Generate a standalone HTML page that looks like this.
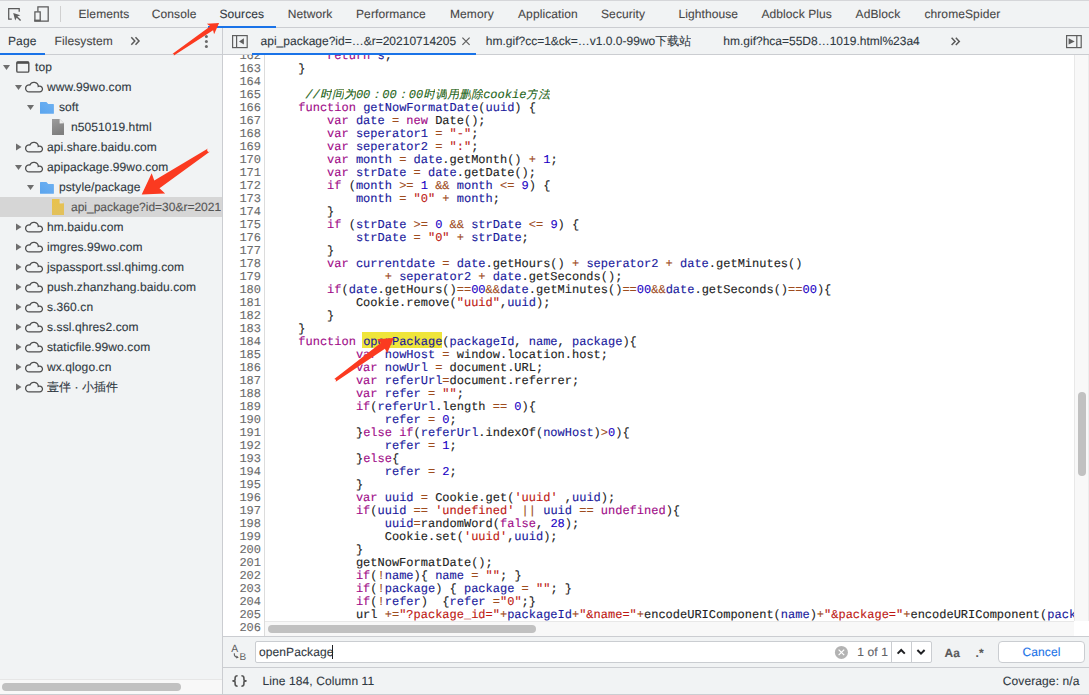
<!DOCTYPE html>
<html><head><meta charset="utf-8">
<style>
*{box-sizing:border-box}
html,body{margin:0;padding:0}
body{text-rendering:geometricPrecision;width:1089px;height:695px;overflow:hidden;position:relative;background:#f1f3f4;font-family:"Liberation Sans",sans-serif;font-size:12px;color:#303942;letter-spacing:0.1px}
.a{position:absolute}
svg{position:absolute;overflow:visible}
.t{position:absolute;white-space:pre;line-height:14px;-webkit-text-stroke:0.1px currentColor}
.hl{position:absolute;background:#cbcdd1}
.vl{position:absolute;background:#cbcdd1}
#code{position:absolute;left:223px;top:55px;width:851px;height:581px;background:#fff;overflow:hidden}
.ln{position:absolute;left:0;width:38px;letter-spacing:0;-webkit-text-stroke:0.1px currentColor;text-align:right;font-family:"Liberation Mono",monospace;font-size:12px;line-height:13px;color:#6b6b6b;white-space:pre}
.cl{position:absolute;left:46.5px;letter-spacing:0;-webkit-text-stroke:0.12px currentColor;font-family:"Liberation Mono",monospace;font-size:12px;line-height:13px;color:#222;white-space:pre}
.k{color:#a00a88}.v{color:#18189c}.o{color:#9e4c1e}.s{color:#bd1712}.n{color:#1a00c4}.c{color:#1f6621;font-style:italic}
.cj{display:inline-block;width:12px;overflow:hidden;vertical-align:top}
.row{position:absolute;left:0;width:222px;height:20px}
.rt{position:absolute;white-space:pre;line-height:20px;top:0;-webkit-text-stroke:0.12px currentColor}
</style></head><body>
<!-- ===== top toolbar ===== -->
<div class="hl" style="left:0;top:0;width:1089px;height:1px;background:#d5d6d9"></div>
<div class="hl" style="left:0;top:27px;width:1089px;height:1px"></div>
<svg style="left:0;top:0" width="70" height="27" viewBox="0 0 70 27">
  <path d="M11.8,19 H8.7 V8.6 H19.2 V11.7" fill="none" stroke="#5a5a5a" stroke-width="1.25" stroke-linejoin="miter"/>
  <path d="M13.2,13.1 L20.3,15.3 L17.3,16.6 L15.2,20.4 Z" fill="#5f5f5f"/>
  <path d="M16.5,16.5 L20.6,20.6" stroke="#5f5f5f" stroke-width="1.4"/>
  <path d="M37.9,11.5 V6.8 H48.2 V21 H40.5" fill="none" stroke="#5a5a5a" stroke-width="1.25"/>
  <rect x="34.9" y="11.9" width="5.3" height="9.1" fill="none" stroke="#5a5a5a" stroke-width="1.25"/>
  <rect x="34.3" y="19.6" width="6.4" height="2" fill="#5f5f5f"/>
  <rect x="60" y="6" width="1" height="16" fill="#d0d0d0"/>
</svg>
<div class="a" style="left:208px;top:26px;width:68px;height:2px;background:#1a73e8"></div>
<div class="t" style="left:78.5px;top:7px;color:#474747">Elements</div>
<div class="t" style="left:151.8px;top:7px;color:#474747">Console</div>
<div class="t" style="left:219.4px;top:7px">Sources</div>
<div class="t" style="left:287.7px;top:7px;color:#474747">Network</div>
<div class="t" style="left:356px;top:7px;color:#474747">Performance</div>
<div class="t" style="left:450px;top:7px;color:#474747">Memory</div>
<div class="t" style="left:518px;top:7px;color:#474747">Application</div>
<div class="t" style="left:601px;top:7px;color:#474747">Security</div>
<div class="t" style="left:678.4px;top:7px;color:#474747">Lighthouse</div>
<div class="t" style="left:761.4px;top:7px;color:#474747">Adblock Plus</div>
<div class="t" style="left:855.6px;top:7px;color:#474747">AdBlock</div>
<div class="t" style="left:924.4px;top:7px;color:#474747">chromeSpider</div>

<!-- ===== sidebar ===== -->
<div class="vl" style="left:222px;top:28px;width:1px;height:667px"></div>
<div class="hl" style="left:0;top:54px;width:1089px;height:1px"></div>
<div class="a" style="left:0;top:53px;width:45px;height:2px;background:#1a73e8"></div>
<div class="t" style="left:8px;top:34px">Page</div>
<div class="t" style="left:54.5px;top:34px;color:#474747">Filesystem</div>
<svg style="left:0;top:28px" width="222" height="26" viewBox="0 0 222 26">
  <path d="M131.3,9.3 L134.8,13 L131.3,16.7 M135.5,9.3 L139,13 L135.5,16.7" fill="none" stroke="#5a5a5a" stroke-width="1.5"/>
  <circle cx="206.4" cy="8.5" r="1.5" fill="#6a6a6a"/>
  <circle cx="206.4" cy="13.5" r="1.5" fill="#6a6a6a"/>
  <circle cx="206.4" cy="18.5" r="1.5" fill="#6a6a6a"/>
</svg>
<div class="a" style="left:0;top:55px;width:222px;height:624px;overflow:hidden">
<div class="rt" style="left:35.0px;top:2px;color:#303942">top</div>
<div class="rt" style="left:47.0px;top:22px;color:#303942">www.99wo.com</div>
<div class="rt" style="left:59.0px;top:42px;color:#303942">soft</div>
<div class="rt" style="left:71.0px;top:62px;color:#303942">n5051019.html</div>
<div class="rt" style="left:47.0px;top:82px;color:#303942">api.share.baidu.com</div>
<div class="rt" style="left:47.0px;top:102px;color:#303942">apipackage.99wo.com</div>
<div class="rt" style="left:59.0px;top:122px;color:#303942">pstyle/package</div>
<div class="a" style="left:0;top:142px;width:222px;height:20px;background:#d6d6d6"></div>
<div class="rt" style="left:71.0px;top:142px;color:#555;letter-spacing:0;width:150px;overflow:hidden">api_package?id=30&amp;r=20210714205</div>
<div class="rt" style="left:47.0px;top:162px;color:#303942">hm.baidu.com</div>
<div class="rt" style="left:47.0px;top:182px;color:#303942">imgres.99wo.com</div>
<div class="rt" style="left:47.0px;top:202px;color:#303942">jspassport.ssl.qhimg.com</div>
<div class="rt" style="left:47.0px;top:222px;color:#303942">push.zhanzhang.baidu.com</div>
<div class="rt" style="left:47.0px;top:242px;color:#303942">s.360.cn</div>
<div class="rt" style="left:47.0px;top:262px;color:#303942">s.ssl.qhres2.com</div>
<div class="rt" style="left:47.0px;top:282px;color:#303942">staticfile.99wo.com</div>
<div class="rt" style="left:47.0px;top:302px;color:#303942">wx.qlogo.cn</div>
<div class="rt" style="left:47.0px;top:322px;color:#303942"><span class="cj">壹</span><span class="cj">伴</span> · <span class="cj">小</span><span class="cj">插</span><span class="cj">件</span></div>
<svg style="left:0;top:0" width="222" height="624" viewBox="0 0 222 624"><defs><linearGradient id="gf" x1="0" y1="0" x2="0.3" y2="1"><stop offset="0" stop-color="#9c9c9c"/><stop offset="1" stop-color="#7f7f7f"/></linearGradient><linearGradient id="gy" x1="0" y1="0" x2="0.3" y2="1"><stop offset="0" stop-color="#e9c24a"/><stop offset="1" stop-color="#e2c15c"/></linearGradient><linearGradient id="gb" x1="0" y1="1" x2="1" y2="0"><stop offset="0" stop-color="#5aa4ee"/><stop offset="1" stop-color="#6eb1f2"/></linearGradient></defs><path d="M3.0,9.9 H10.0 L6.5,15.1 Z" fill="#6e6e6e"/><rect x="16.8" y="6.9" width="12" height="10.2" rx="1.2" fill="none" stroke="#4f4f4f" stroke-width="1.4"/><rect x="16.8" y="6.6" width="12" height="2.2" fill="#4f4f4f"/><path d="M15.0,29.9 H22.0 L18.5,35.1 Z" fill="#6e6e6e"/><path transform="translate(25.0,26.0)" d="M4.35,10.9 H14.5 A2.9,2.9 0 1 0 13.3,5.4 A4.375,4.375 0 0 0 4.9,4.0 A3.5,3.5 0 1 0 4.35,10.9 Z" fill="none" stroke="#4f4f4f" stroke-width="1.3"/><path d="M27.0,49.9 H34.0 L30.5,55.1 Z" fill="#6e6e6e"/><path transform="translate(40.0,47.0)" d="M0.6,0 H6.4 L8.2,1.9 H13.3 Q13.9,1.9 13.9,2.5 V11.2 Q13.9,11.8 13.3,11.8 H0.6 Q0,11.8 0,11.2 V0.6 Q0,0 0.6,0 Z" fill="url(#gb)"/><path transform="translate(52.0,64.0)" d="M0,0 H7.6 L12,4.3 V16 H0 Z" fill="url(#gf)"/><path transform="translate(52.0,64.0)" d="M7.6,0 V4.6 L12,4.3 Z" fill="#eeeeee"/><path d="M16.0,88.5 V95.6 L21.5,92.0 Z" fill="#6e6e6e"/><path transform="translate(25.0,86.0)" d="M4.35,10.9 H14.5 A2.9,2.9 0 1 0 13.3,5.4 A4.375,4.375 0 0 0 4.9,4.0 A3.5,3.5 0 1 0 4.35,10.9 Z" fill="none" stroke="#4f4f4f" stroke-width="1.3"/><path d="M15.0,109.9 H22.0 L18.5,115.1 Z" fill="#6e6e6e"/><path transform="translate(25.0,106.0)" d="M4.35,10.9 H14.5 A2.9,2.9 0 1 0 13.3,5.4 A4.375,4.375 0 0 0 4.9,4.0 A3.5,3.5 0 1 0 4.35,10.9 Z" fill="none" stroke="#4f4f4f" stroke-width="1.3"/><path d="M27.0,129.9 H34.0 L30.5,135.1 Z" fill="#6e6e6e"/><path transform="translate(40.0,127.0)" d="M0.6,0 H6.4 L8.2,1.9 H13.3 Q13.9,1.9 13.9,2.5 V11.2 Q13.9,11.8 13.3,11.8 H0.6 Q0,11.8 0,11.2 V0.6 Q0,0 0.6,0 Z" fill="url(#gb)"/><path transform="translate(52.0,144.0)" d="M0,0 H7.6 L12,4.3 V16 H0 Z" fill="url(#gy)"/><path transform="translate(52.0,144.0)" d="M7.6,0 V4.6 L12,4.3 Z" fill="#dcdde0"/><path d="M16.0,168.5 V175.6 L21.5,172.1 Z" fill="#6e6e6e"/><path transform="translate(25.0,166.0)" d="M4.35,10.9 H14.5 A2.9,2.9 0 1 0 13.3,5.4 A4.375,4.375 0 0 0 4.9,4.0 A3.5,3.5 0 1 0 4.35,10.9 Z" fill="none" stroke="#4f4f4f" stroke-width="1.3"/><path d="M16.0,188.5 V195.6 L21.5,192.1 Z" fill="#6e6e6e"/><path transform="translate(25.0,186.0)" d="M4.35,10.9 H14.5 A2.9,2.9 0 1 0 13.3,5.4 A4.375,4.375 0 0 0 4.9,4.0 A3.5,3.5 0 1 0 4.35,10.9 Z" fill="none" stroke="#4f4f4f" stroke-width="1.3"/><path d="M16.0,208.5 V215.6 L21.5,212.1 Z" fill="#6e6e6e"/><path transform="translate(25.0,206.0)" d="M4.35,10.9 H14.5 A2.9,2.9 0 1 0 13.3,5.4 A4.375,4.375 0 0 0 4.9,4.0 A3.5,3.5 0 1 0 4.35,10.9 Z" fill="none" stroke="#4f4f4f" stroke-width="1.3"/><path d="M16.0,228.5 V235.6 L21.5,232.1 Z" fill="#6e6e6e"/><path transform="translate(25.0,226.0)" d="M4.35,10.9 H14.5 A2.9,2.9 0 1 0 13.3,5.4 A4.375,4.375 0 0 0 4.9,4.0 A3.5,3.5 0 1 0 4.35,10.9 Z" fill="none" stroke="#4f4f4f" stroke-width="1.3"/><path d="M16.0,248.5 V255.6 L21.5,252.1 Z" fill="#6e6e6e"/><path transform="translate(25.0,246.0)" d="M4.35,10.9 H14.5 A2.9,2.9 0 1 0 13.3,5.4 A4.375,4.375 0 0 0 4.9,4.0 A3.5,3.5 0 1 0 4.35,10.9 Z" fill="none" stroke="#4f4f4f" stroke-width="1.3"/><path d="M16.0,268.5 V275.6 L21.5,272.1 Z" fill="#6e6e6e"/><path transform="translate(25.0,266.0)" d="M4.35,10.9 H14.5 A2.9,2.9 0 1 0 13.3,5.4 A4.375,4.375 0 0 0 4.9,4.0 A3.5,3.5 0 1 0 4.35,10.9 Z" fill="none" stroke="#4f4f4f" stroke-width="1.3"/><path d="M16.0,288.5 V295.6 L21.5,292.1 Z" fill="#6e6e6e"/><path transform="translate(25.0,286.0)" d="M4.35,10.9 H14.5 A2.9,2.9 0 1 0 13.3,5.4 A4.375,4.375 0 0 0 4.9,4.0 A3.5,3.5 0 1 0 4.35,10.9 Z" fill="none" stroke="#4f4f4f" stroke-width="1.3"/><path d="M16.0,308.5 V315.6 L21.5,312.1 Z" fill="#6e6e6e"/><path transform="translate(25.0,306.0)" d="M4.35,10.9 H14.5 A2.9,2.9 0 1 0 13.3,5.4 A4.375,4.375 0 0 0 4.9,4.0 A3.5,3.5 0 1 0 4.35,10.9 Z" fill="none" stroke="#4f4f4f" stroke-width="1.3"/><path d="M16.0,328.5 V335.6 L21.5,332.1 Z" fill="#6e6e6e"/><path transform="translate(25.0,326.0)" d="M4.35,10.9 H14.5 A2.9,2.9 0 1 0 13.3,5.4 A4.375,4.375 0 0 0 4.9,4.0 A3.5,3.5 0 1 0 4.35,10.9 Z" fill="none" stroke="#4f4f4f" stroke-width="1.3"/></svg>
</div>

<!-- sidebar scrollbar -->
<div class="a" style="left:0;top:679px;width:222px;height:15px;background:#f8f8f8;border-top:1px solid #e6e6e6"></div>
<div class="a" style="left:2px;top:683px;width:179px;height:8px;border-radius:4px;background:#c1c1c1"></div>

<!-- ===== editor tabs ===== -->
<svg style="left:223px;top:28px" width="866" height="26" viewBox="0 0 866 26">
  <rect x="9.6" y="7.6" width="14.6" height="12" fill="none" stroke="#5f5f5f" stroke-width="1.2"/>
  <rect x="13" y="7.6" width="1.2" height="12" fill="#5f5f5f"/>
  <path d="M16,13.4 L20.9,10.2 V16.6 Z" fill="#5f5f5f"/>
  <path d="M239.4,9.6 L246.6,16.8 M246.6,9.6 L239.4,16.8" stroke="#5f5f5f" stroke-width="1.2"/>
  <path d="M728.6,9.8 L732.1,13.4 L728.6,17 M732.8,9.8 L736.3,13.4 L732.8,17" fill="none" stroke="#5a5a5a" stroke-width="1.5"/>
  <rect x="843.6" y="7.6" width="14.6" height="12" fill="none" stroke="#5f5f5f" stroke-width="1.2"/>
  <rect x="853.2" y="7.6" width="1.2" height="12" fill="#5f5f5f"/>
  <path d="M851.7,13.4 L845.6,10.2 V16.6 Z" fill="#5f5f5f"/>
</svg>
<div class="a" style="left:251.6px;top:53px;width:224.4px;height:2px;background:#1a73e8"></div>
<div class="t" style="left:260.6px;top:34px;letter-spacing:0">api_package?id=…&amp;r=20210714205</div>
<div class="t" style="left:485.8px;top:34px;letter-spacing:0">hm.gif?cc=1&amp;ck=…v1.0.0-99wo<span class="cj">下</span><span class="cj">载</span><span class="cj">站</span></div>
<div class="t" style="left:723.3px;top:34px;letter-spacing:0">hm.gif?hca=55D8…1019.html%23a4</div>

<!-- ===== code ===== -->
<div id="code">
<div class="a" style="left:41px;top:0;width:1px;height:581px;background:#dcdcdc"></div>
<div class="a" style="left:139px;top:277px;width:80px;height:16px;background:#efe53b"></div>
<div class="ln" style="top:-5px">162</div>
<div class="cl" style="top:-5px">        <span class="k">return</span> <span class="v">s</span>;</div>
<div class="ln" style="top:8px">163</div>
<div class="cl" style="top:8px">    }</div>
<div class="ln" style="top:21px">164</div>
<div class="ln" style="top:34px">165</div>
<div class="cl" style="top:34px">     <span class="c">//<span class="cj">时</span><span class="cj">间</span><span class="cj">为</span>00<span class="cj">：</span>00<span class="cj">：</span>00<span class="cj">时</span><span class="cj">调</span><span class="cj">用</span><span class="cj">删</span><span class="cj">除</span>cookie<span class="cj">方</span><span class="cj">法</span></span></div>
<div class="ln" style="top:47px">166</div>
<div class="cl" style="top:47px">    <span class="k">function</span> <span class="v">getNowFormatDate</span>(<span class="v">uuid</span>) {</div>
<div class="ln" style="top:60px">167</div>
<div class="cl" style="top:60px">        <span class="k">var</span> <span class="v">date</span> <span class="o">=</span> <span class="k">new</span> Date();</div>
<div class="ln" style="top:73px">168</div>
<div class="cl" style="top:73px">        <span class="k">var</span> <span class="v">seperator1</span> <span class="o">=</span> <span class="s">&quot;-&quot;</span>;</div>
<div class="ln" style="top:86px">169</div>
<div class="cl" style="top:86px">        <span class="k">var</span> <span class="v">seperator2</span> <span class="o">=</span> <span class="s">&quot;:&quot;</span>;</div>
<div class="ln" style="top:99px">170</div>
<div class="cl" style="top:99px">        <span class="k">var</span> <span class="v">month</span> <span class="o">=</span> <span class="v">date</span>.getMonth() <span class="o">+</span> <span class="n">1</span>;</div>
<div class="ln" style="top:112px">171</div>
<div class="cl" style="top:112px">        <span class="k">var</span> <span class="v">strDate</span> <span class="o">=</span> <span class="v">date</span>.getDate();</div>
<div class="ln" style="top:125px">172</div>
<div class="cl" style="top:125px">        <span class="k">if</span> (<span class="v">month</span> <span class="o">&gt;=</span> <span class="n">1</span> <span class="o">&amp;&amp;</span> <span class="v">month</span> <span class="o">&lt;=</span> <span class="n">9</span>) {</div>
<div class="ln" style="top:138px">173</div>
<div class="cl" style="top:138px">            <span class="v">month</span> <span class="o">=</span> <span class="s">&quot;0&quot;</span> <span class="o">+</span> <span class="v">month</span>;</div>
<div class="ln" style="top:151px">174</div>
<div class="cl" style="top:151px">        }</div>
<div class="ln" style="top:164px">175</div>
<div class="cl" style="top:164px">        <span class="k">if</span> (<span class="v">strDate</span> <span class="o">&gt;=</span> <span class="n">0</span> <span class="o">&amp;&amp;</span> <span class="v">strDate</span> <span class="o">&lt;=</span> <span class="n">9</span>) {</div>
<div class="ln" style="top:177px">176</div>
<div class="cl" style="top:177px">            <span class="v">strDate</span> <span class="o">=</span> <span class="s">&quot;0&quot;</span> <span class="o">+</span> <span class="v">strDate</span>;</div>
<div class="ln" style="top:190px">177</div>
<div class="cl" style="top:190px">        }</div>
<div class="ln" style="top:203px">178</div>
<div class="cl" style="top:203px">        <span class="k">var</span> <span class="v">currentdate</span> <span class="o">=</span> <span class="v">date</span>.getHours() <span class="o">+</span> <span class="v">seperator2</span> <span class="o">+</span> <span class="v">date</span>.getMinutes()</div>
<div class="ln" style="top:216px">179</div>
<div class="cl" style="top:216px">                <span class="o">+</span> <span class="v">seperator2</span> <span class="o">+</span> <span class="v">date</span>.getSeconds();</div>
<div class="ln" style="top:229px">180</div>
<div class="cl" style="top:229px">        <span class="k">if</span>(<span class="v">date</span>.getHours()<span class="o">==</span><span class="n">00</span><span class="o">&amp;&amp;</span><span class="v">date</span>.getMinutes()<span class="o">==</span><span class="n">00</span><span class="o">&amp;&amp;</span><span class="v">date</span>.getSeconds()<span class="o">==</span><span class="n">00</span>){</div>
<div class="ln" style="top:242px">181</div>
<div class="cl" style="top:242px">            Cookie.remove(<span class="s">&quot;uuid&quot;</span>,<span class="v">uuid</span>);</div>
<div class="ln" style="top:255px">182</div>
<div class="cl" style="top:255px">        }</div>
<div class="ln" style="top:268px">183</div>
<div class="cl" style="top:268px">    }</div>
<div class="ln" style="top:281px">184</div>
<div class="cl" style="top:281px">    <span class="k">function</span> <span class="v">openPackage</span>(<span class="v">packageId</span>, <span class="v">name</span>, <span class="v">package</span>){</div>
<div class="ln" style="top:294px">185</div>
<div class="cl" style="top:294px">            <span class="k">var</span> <span class="v">nowHost</span> <span class="o">=</span> window.location.host;</div>
<div class="ln" style="top:307px">186</div>
<div class="cl" style="top:307px">            <span class="k">var</span> <span class="v">nowUrl</span> <span class="o">=</span> document.URL;</div>
<div class="ln" style="top:320px">187</div>
<div class="cl" style="top:320px">            <span class="k">var</span> <span class="v">referUrl</span><span class="o">=</span>document.referrer;</div>
<div class="ln" style="top:333px">188</div>
<div class="cl" style="top:333px">            <span class="k">var</span> <span class="v">refer</span> <span class="o">=</span> <span class="s">&quot;&quot;</span>;</div>
<div class="ln" style="top:346px">189</div>
<div class="cl" style="top:346px">            <span class="k">if</span>(<span class="v">referUrl</span>.length <span class="o">==</span> <span class="n">0</span>){</div>
<div class="ln" style="top:359px">190</div>
<div class="cl" style="top:359px">                <span class="v">refer</span> <span class="o">=</span> <span class="n">0</span>;</div>
<div class="ln" style="top:372px">191</div>
<div class="cl" style="top:372px">            }<span class="k">else</span> <span class="k">if</span>(<span class="v">referUrl</span>.indexOf(<span class="v">nowHost</span>)<span class="o">&gt;</span><span class="n">0</span>){</div>
<div class="ln" style="top:385px">192</div>
<div class="cl" style="top:385px">                <span class="v">refer</span> <span class="o">=</span> <span class="n">1</span>;</div>
<div class="ln" style="top:398px">193</div>
<div class="cl" style="top:398px">            }<span class="k">else</span>{</div>
<div class="ln" style="top:411px">194</div>
<div class="cl" style="top:411px">                <span class="v">refer</span> <span class="o">=</span> <span class="n">2</span>;</div>
<div class="ln" style="top:424px">195</div>
<div class="cl" style="top:424px">            }</div>
<div class="ln" style="top:437px">196</div>
<div class="cl" style="top:437px">            <span class="k">var</span> <span class="v">uuid</span> <span class="o">=</span> Cookie.get(<span class="s">&#x27;uuid&#x27;</span> ,<span class="v">uuid</span>);</div>
<div class="ln" style="top:450px">197</div>
<div class="cl" style="top:450px">            <span class="k">if</span>(<span class="v">uuid</span> <span class="o">==</span> <span class="s">&#x27;undefined&#x27;</span> <span class="o">||</span> <span class="v">uuid</span> <span class="o">==</span> <span class="k">undefined</span>){</div>
<div class="ln" style="top:463px">198</div>
<div class="cl" style="top:463px">                <span class="v">uuid</span><span class="o">=</span>randomWord(<span class="k">false</span>, <span class="n">28</span>);</div>
<div class="ln" style="top:476px">199</div>
<div class="cl" style="top:476px">                Cookie.set(<span class="s">&#x27;uuid&#x27;</span>,<span class="v">uuid</span>);</div>
<div class="ln" style="top:489px">200</div>
<div class="cl" style="top:489px">            }</div>
<div class="ln" style="top:502px">201</div>
<div class="cl" style="top:502px">            getNowFormatDate();</div>
<div class="ln" style="top:515px">202</div>
<div class="cl" style="top:515px">            <span class="k">if</span>(<span class="o">!</span><span class="v">name</span>){ <span class="v">name</span> <span class="o">=</span> <span class="s">&quot;&quot;</span>; }</div>
<div class="ln" style="top:528px">203</div>
<div class="cl" style="top:528px">            <span class="k">if</span>(<span class="o">!</span><span class="v">package</span>) { <span class="v">package</span> <span class="o">=</span> <span class="s">&quot;&quot;</span>; }</div>
<div class="ln" style="top:541px">204</div>
<div class="cl" style="top:541px">            <span class="k">if</span>(<span class="o">!</span><span class="v">refer</span>)  {<span class="v">refer</span> <span class="o">=</span><span class="s">&quot;0&quot;</span>;}</div>
<div class="ln" style="top:554px">205</div>
<div class="cl" style="top:554px">            url <span class="o">+=</span><span class="s">&quot;?package_id=&quot;</span><span class="o">+</span><span class="v">packageId</span><span class="o">+</span><span class="s">&quot;&amp;name=&quot;</span><span class="o">+</span>encodeURIComponent(<span class="v">name</span>)<span class="o">+</span><span class="s">&quot;&amp;package=&quot;</span><span class="o">+</span>encodeURIComponent(<span class="v">package</span>)<span class="o">+</span><span class="s">&quot;&amp;refer=&quot;</span><span class="o">+</span><span class="v">refer</span>;</div>
<div class="ln" style="top:567px">206</div>
<div class="ln" style="top:580px">207</div>

<!-- h scrollbar -->
<div class="a" style="left:42px;top:566px;width:809px;height:15px;background:#f8f8f8;border-top:1px solid #e8e8e8"></div>
<div class="a" style="left:45px;top:570px;width:268px;height:8px;border-radius:4px;background:#c1c1c1"></div>
<!-- v scrollbar -->
</div>
<div class="a" style="left:1074px;top:55px;width:15px;height:566px;background:#f8f8f8;border-left:1px solid #e8e8e8;border-right:1px solid #ececec"></div>
<div class="a" style="left:1078px;top:392px;width:8px;height:84px;border-radius:4px;background:#c1c1c1"></div>
<div class="a" style="left:1074px;top:621px;width:15px;height:15px;background:#fff"></div>

<!-- ===== search bar ===== -->
<div class="hl" style="left:223px;top:636px;width:866px;height:1px"></div>
<svg style="left:223px;top:636px" width="866" height="31" viewBox="0 0 866 31">
  <text x="8.2" y="15.7" font-family="Liberation Sans" font-size="10.4" fill="#5f5f5f">A</text>
  <text x="16.4" y="23.7" font-family="Liberation Sans" font-size="10" fill="#5f5f5f">B</text>
  <path d="M11.3,17.2 Q11,21 14.6,21.4" fill="none" stroke="#5f5f5f" stroke-width="1.1"/>
  <path d="M13.4,19.6 L15.8,21.5 L13.2,22.6 Z" fill="#5f5f5f"/>
</svg>
<div class="a" style="left:255px;top:641px;width:677px;height:22px;background:#fff;border:1px solid #cacdd1;border-radius:2px"></div>
<div class="t" style="left:259px;top:645px">openPackage</div>
<div class="a" style="left:332px;top:645px;width:1px;height:14px;background:#202124"></div>
<div class="a" style="left:891px;top:642px;width:1px;height:20px;background:#cacdd1"></div>
<div class="a" style="left:911px;top:642px;width:1px;height:20px;background:#cacdd1"></div>
<svg style="left:0;top:0" width="1089" height="695" viewBox="0 0 1089 695">
  <circle cx="841.4" cy="652.4" r="6.5" fill="#b3b3b3"/>
  <path d="M838.6,649.6 L844.2,655.2 M844.2,649.6 L838.6,655.2" stroke="#fff" stroke-width="1.2"/>
  <path d="M897.6,653.6 L901.2,650 L904.8,653.6" fill="none" stroke="#202124" stroke-width="2"/>
  <path d="M917.4,650 L921,653.6 L924.6,650" fill="none" stroke="#202124" stroke-width="2"/>
</svg>
<div class="t" style="left:857.3px;top:645px;color:#5f6368">1 of 1</div>
<div class="t" style="left:944.4px;top:646px;font-weight:bold;color:#5a5a5a">Aa</div>
<div class="t" style="left:975.5px;top:646px;font-weight:bold;color:#5a5a5a">.*</div>
<div class="a" style="left:998px;top:641px;width:87px;height:22px;background:#fff;border:1px solid #cacdd1;border-radius:4px"></div>
<div class="t" style="left:1022.5px;top:645px;color:#1a73e8">Cancel</div>

<!-- ===== status bar ===== -->
<div class="hl" style="left:223px;top:667px;width:866px;height:1px"></div>
<svg style="left:0;top:0" width="300" height="695" viewBox="0 0 300 695"><path d="M237.6,675.7 Q235.1,675.7 235.1,677.9 V679.5 Q235.1,680.9 232.4,680.9 Q235.1,680.9 235.1,682.3 V684.1 Q235.1,686.3 237.6,686.3 M241.4,675.7 Q243.9,675.7 243.9,677.9 V679.5 Q243.9,680.9 246.6,680.9 Q243.9,680.9 243.9,682.3 V684.1 Q243.9,686.3 241.4,686.3" fill="none" stroke="#555" stroke-width="1.6"/></svg>
<div class="t" style="left:262.5px;top:674px">Line 184, Column 11</div>
<div class="t" style="left:1002.8px;top:674px">Coverage: n/a</div>
<div class="hl" style="left:0;top:694px;width:1089px;height:1px"></div>

<!-- ===== red arrows ===== -->
<svg style="left:0;top:0" width="1089" height="695" viewBox="0 0 1089 695"><g fill="#fb3a20"><path d="M213.10,30.26 L214.08,34.33 L219.10,23.10 L206.82,23.78 L210.27,26.14 L172.28,53.99 A1.10,1.10 0 0 1 173.52,55.81 Z"/><path d="M154.28,180.41 L151.68,173.20 L141.70,194.40 L165.11,193.57 L159.51,188.34 L210.05,151.59 A1.90,1.90 0 0 1 207.95,148.41 Z"/><path d="M384.88,348.68 L387.21,353.28 L393.70,338.00 L377.15,339.33 L380.78,343.00 L333.62,379.48 A1.50,1.50 0 0 1 335.38,381.92 Z"/></g></svg>

</body></html>
